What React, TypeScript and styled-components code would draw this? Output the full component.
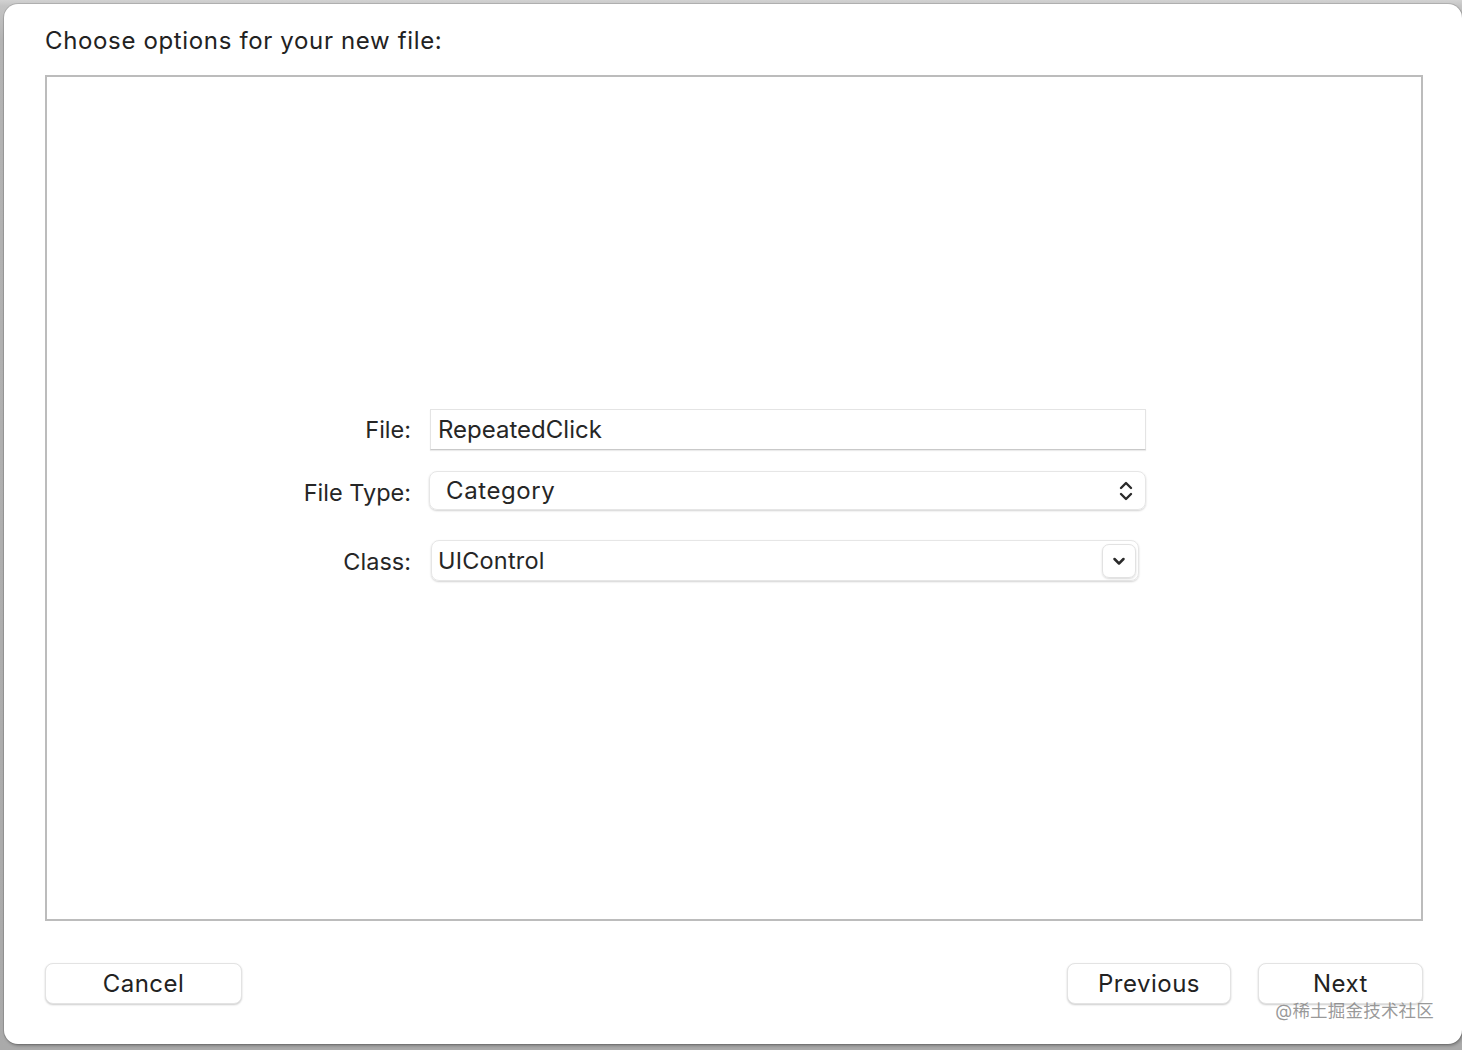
import React from 'react';
import styled, { createGlobalStyle } from 'styled-components';

const GlobalStyle = createGlobalStyle`
  html, body {
    margin: 0;
    padding: 0;
    background: #b3b3b3;
    font-family: Inter, "Noto Sans", "Noto Sans CJK SC", sans-serif;
  }
`;

const Screen = styled.div`
  width: 1462px;
  height: 1050px;
  overflow: hidden;
  background: linear-gradient(180deg, #d2d2d2 0px, #c4c4c4 6px, #b4b4b4 40px, #aaaaaa 100%);
  padding: 4px 0 6px 4px;
  box-sizing: border-box;
`;

const Sheet = styled.div`
  height: 100%;
  background: #ffffff;
  border-radius: 14px;
  box-shadow: 0 0 0 1px rgba(0, 0, 0, 0.12), 1px 2px 3px rgba(0, 0, 0, 0.25);
  display: flex;
  flex-direction: column;
  padding: 0 39px 0 41px;
  box-sizing: border-box;
  position: relative;
`;

const Title = styled.div`
  font-size: 24px;
  line-height: 28px;
  color: #222;
  padding: 23px 0 20px;
  letter-spacing: 0.65px;
`;

const OptionsBox = styled.div`
  flex: 1;
  border: 2px solid #bcbcbc;
  display: flex;
  flex-direction: column;
  justify-content: center;
  padding-bottom: 6px;
`;

const Row = styled.div<{ $gap: number; $h: number }>`
  display: grid;
  grid-template-columns: 364px 716px;
  column-gap: 19px;
  align-items: center;
  height: ${(p) => p.$h}px;
  margin-top: ${(p) => p.$gap}px;
`;

const Label = styled.div<{ $dy?: number }>`
  text-align: right;
  font-size: 23.5px;
  color: #262626;
  transform: translateY(${(p) => p.$dy ?? 0}px);
`;

const TextField = styled.div`
  height: 41px;
  box-sizing: border-box;
  border: 1px solid #e4e4e4;
  border-bottom-color: #c9c9c9;
  box-shadow: 0 1px 1px rgba(0, 0, 0, 0.08);
  display: flex;
  align-items: center;
  padding-left: 7px;
  font-size: 24px;
  color: #262626;
  width: 716px;
`;

const PopUp = styled.div<{ $w: number; $ml: number }>`
  height: 100%;
  width: ${(p) => p.$w}px;
  margin-left: ${(p) => p.$ml}px;
  box-sizing: border-box;
  border-radius: 8px;
  border: 1px solid #e6e6e6;
  box-shadow: 0 1px 2px rgba(0, 0, 0, 0.18);
  display: flex;
  align-items: center;
  justify-content: space-between;
  color: #262626;
`;

const PopText = styled.span<{ $pl: number; $size: number; $ls: number }>`
  padding-left: ${(p) => p.$pl}px;
  font-size: ${(p) => p.$size}px;
  letter-spacing: ${(p) => p.$ls}px;
`;

const StepperIcon = styled.svg`
  margin-right: 12px;
`;

const ArrowButton = styled.div`
  width: 34px;
  height: 34px;
  margin-right: 2px;
  box-sizing: border-box;
  border-radius: 7px;
  border: 1px solid #e2e2e2;
  box-shadow: 0 1px 2px rgba(0, 0, 0, 0.15);
  display: flex;
  align-items: center;
  justify-content: center;
`;

const Footer = styled.div`
  display: flex;
  align-items: center;
  padding: 42px 0 40px;
  gap: 27px;
`;

const Spacer = styled.div`
  flex: 1;
`;

const PushButton = styled.button<{ $w: number }>`
  width: ${(p) => p.$w}px;
  height: 41px;
  border-radius: 8px;
  border: 1px solid #e3e3e3;
  background: #fff;
  box-shadow: 0 1px 2px rgba(0, 0, 0, 0.2);
  font-family: inherit;
  font-size: 24px;
  letter-spacing: 0.5px;
  color: #222;
  padding: 0;
`;

const Watermark = styled.div`
  position: absolute;
  right: 28px;
  bottom: 22px;
  font-size: 17.5px;
  color: rgba(120, 120, 120, 0.75);
  letter-spacing: 0.2px;
`;

const App: React.FC = () => {
  return (
    <Screen>
      <GlobalStyle />
      <Sheet>
        <Title>Choose options for your new file:</Title>
        <OptionsBox>
          <Row $gap={0} $h={41}>
            <Label>File:</Label>
            <TextField>RepeatedClick</TextField>
          </Row>
          <Row $gap={21} $h={39}>
            <Label $dy={2}>File Type:</Label>
            <PopUp $w={717} $ml={-1}>
              <PopText $pl={16} $size={24} $ls={0.6}>Category</PopText>
              <StepperIcon width="14" height="24" viewBox="0 0 14 24">
                <path d="M2 9 L7 4 L12 9" fill="none" stroke="#2a2a2a" strokeWidth="2.4" strokeLinecap="round" strokeLinejoin="round" />
                <path d="M2 15 L7 20 L12 15" fill="none" stroke="#2a2a2a" strokeWidth="2.4" strokeLinecap="round" strokeLinejoin="round" />
              </StepperIcon>
            </PopUp>
          </Row>
          <Row $gap={30} $h={41}>
            <Label $dy={1}>Class:</Label>
            <PopUp $w={708} $ml={1}>
              <PopText $pl={6} $size={23.5} $ls={0.2}>UIControl</PopText>
              <ArrowButton>
                <svg width="14" height="10" viewBox="0 0 14 10">
                  <path d="M2.5 3 L7 7.5 L11.5 3" fill="none" stroke="#2a2a2a" strokeWidth="2.5" strokeLinecap="round" strokeLinejoin="round" />
                </svg>
              </ArrowButton>
            </PopUp>
          </Row>
        </OptionsBox>
        <Footer>
          <PushButton $w={197}>Cancel</PushButton>
          <Spacer />
          <PushButton $w={164}>Previous</PushButton>
          <PushButton $w={165}>Next</PushButton>
        </Footer>
        <Watermark>@稀土掘金技术社区</Watermark>
      </Sheet>
    </Screen>
  );
};

export default App;
